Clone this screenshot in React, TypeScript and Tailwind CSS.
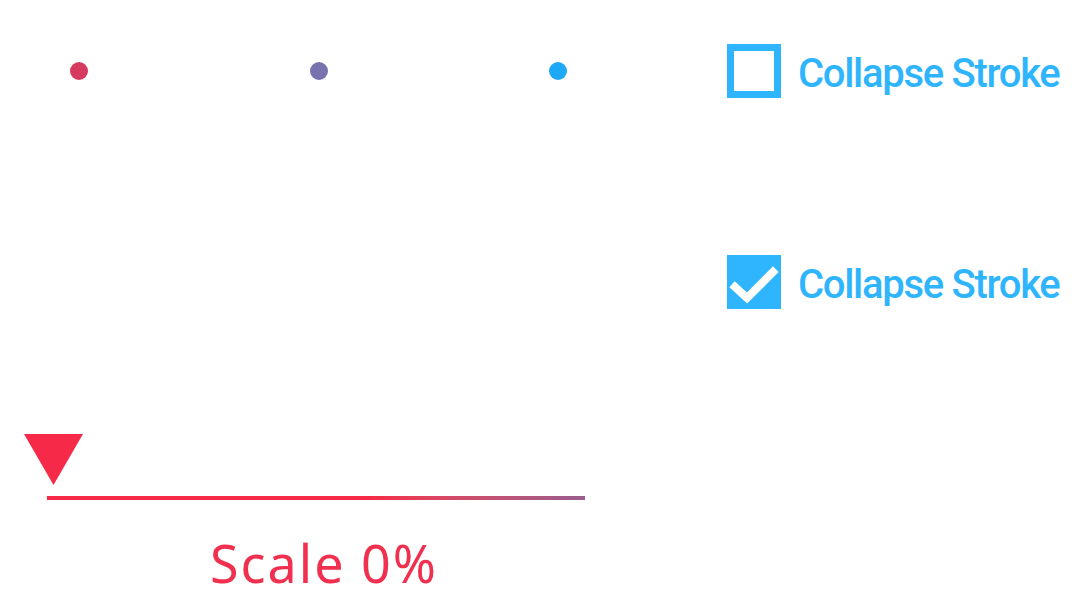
import React from "react";

function Checkbox({ checked }: { checked: boolean }) {
  if (checked) {
    return (
      <div className="w-[54px] h-[54px] bg-[#2fb5fd] flex items-center justify-center shrink-0">
        <svg width="54" height="54" viewBox="0 0 54 54">
          <path d="M8 32 L20 43 L46 17" fill="none" stroke="#ffffff" strokeWidth="8" strokeLinecap="square" />
        </svg>
      </div>
    );
  }
  return <div className="w-[54px] h-[54px] border-[7px] border-[#2fb5fd] bg-white shrink-0" />;
}

function Row({ checked }: { checked: boolean }) {
  return (
    <div className="flex items-center gap-[17px]">
      <Checkbox checked={checked} />
      <span
        className="text-[#2fb5fd] text-[40px] leading-none font-medium whitespace-nowrap tracking-[-1.3px] pt-[5px]"
        style={{ fontFamily: 'Roboto, "Liberation Sans", sans-serif' }}
      >
        Collapse Stroke
      </span>
    </div>
  );
}

export default function App() {
  return (
    <div className="w-[1080px] h-[600px] bg-white flex overflow-hidden">
      <div className="w-[700px] shrink-0 flex flex-col">
        <div className="pt-[62px] pl-[70px] w-[567px] flex justify-between">
          <div className="w-[18px] h-[18px] rounded-full bg-[#d63b5f]" />
          <div className="w-[18px] h-[18px] rounded-full bg-[#7873ae]" />
          <div className="w-[18px] h-[18px] rounded-full bg-[#1ea9f6]" />
        </div>
        <div className="mt-[354px] pl-[24px] flex flex-col">
          <svg width="59" height="51" viewBox="0 0 59 51">
            <polygon points="0,0 59,0 29.5,51" fill="#f62a48" />
          </svg>
          <div className="ml-[23px] mt-[11px] w-[538px] h-[4px] bg-gradient-to-r from-[#f62a48] from-60% to-[#9a5c8d]" />
          <div
            className="ml-[23px] w-[538px] mt-[37px] text-center text-[#f0304e] text-[52px] leading-none tracking-[2px] pl-[16px]"
            style={{ fontFamily: '"Noto Sans", sans-serif' }}
          >
            Scale 0%
          </div>
        </div>
      </div>
      <div className="pl-[27px] pt-[44px] flex flex-col gap-[157px]">
        <Row checked={false} />
        <Row checked={true} />
      </div>
    </div>
  );
}
